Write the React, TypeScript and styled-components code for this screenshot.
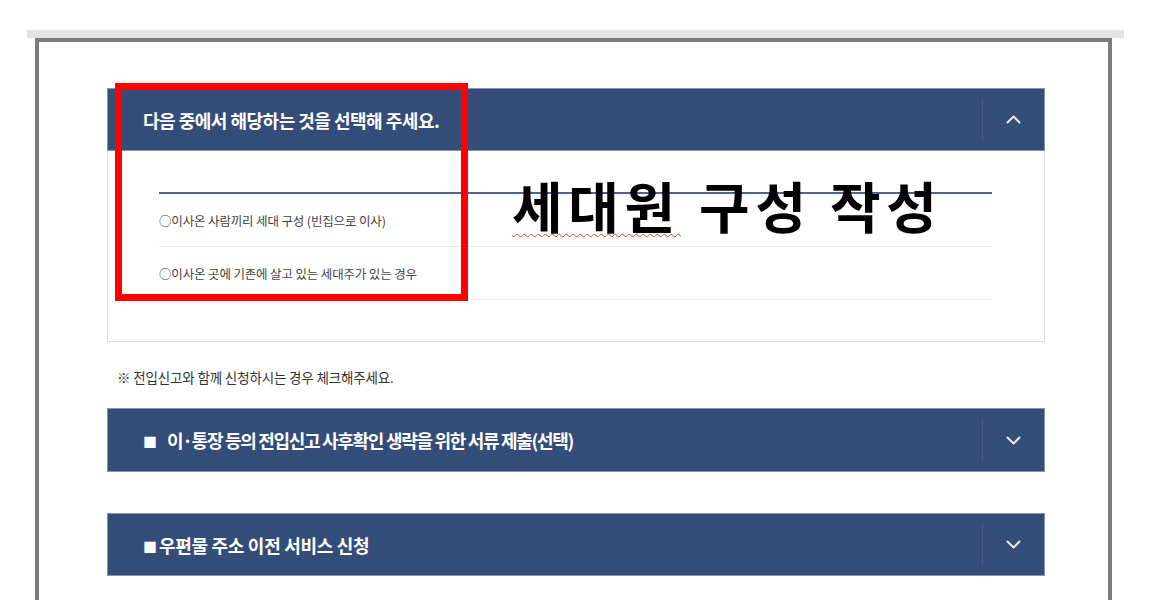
import React from "react";
import styled, { createGlobalStyle } from "styled-components";

const GlobalStyle = createGlobalStyle`
  html, body {
    margin: 0;
    padding: 0;
    background: #ffffff;
  }
  body {
    font-family: "Noto Sans CJK KR", "Noto Sans", sans-serif;
  }
  * { box-sizing: border-box; }
`;

const Page = styled.div`
  height: 600px;
  overflow: hidden;
  padding-top: 30px;
`;

const TopStrip = styled.div`
  margin-left: 27px;
  width: 1097px;
  height: 8px;
  background: #e4e4e4;
`;

const Frame = styled.div`
  position: relative;
  margin-left: 35px;
  width: 1077px;
  height: 562px;
  border: 4px solid #7f7b7a;
  border-bottom: none;
  padding: 46px 63px 0 68px;
`;

const Accordion = styled.section<{ $gap?: number }>`
  margin-bottom: ${(p) => p.$gap ?? 0}px;
`;

const Header = styled.div<{ $h?: number }>`
  display: flex;
  align-items: center;
  height: ${(p) => p.$h ?? 63}px;
  background: #344c78;
  border: 1px solid #8393b4;
`;

const HeaderTitle = styled.h3<{ $ls: number }>`
  flex: 1;
  margin: 0;
  padding-left: 35px;
  color: #ffffff;
  font-size: 18px;
  font-weight: 700;
  letter-spacing: ${(p) => p.$ls}px;
  white-space: nowrap;
`;

const Bullet = styled.span<{ $space: number }>`
  display: inline-block;
  font-size: 14px;
  letter-spacing: 0;
  margin-right: ${(p) => p.$space}px;
  vertical-align: 1px;
`;

const Toggle = styled.div`
  position: relative;
  width: 62px;
  height: 100%;
  display: flex;
  align-items: center;
  justify-content: center;
  &::before {
    content: "";
    position: absolute;
    left: 0;
    top: 9px;
    bottom: 9px;
    width: 1px;
    background: #445c86;
  }
`;

const Body = styled.div`
  border: 1px solid #dcdcdc;
  border-top: none;
  padding: 41px 52px 41px 51px;
`;

const OptionList = styled.ul`
  list-style: none;
  margin: 0;
  padding: 0;
  border-top: 2px solid #4d6290;
`;

const OptionRow = styled.li`
  display: flex;
  align-items: center;
  height: 53px;
  border-bottom: 1px solid #ebebeb;
  color: #444444;
  font-size: 12.5px;
  letter-spacing: -0.15px;
  padding-top: 1px;
`;

const Note = styled.p`
  margin: 0;
  height: 66px;
  display: flex;
  align-items: center;
  padding: 3px 0 0 10px;
  color: #333333;
  font-size: 13.5px;
  letter-spacing: -0.15px;
`;

const RedBox = styled.div`
  position: absolute;
  left: 76px;
  top: 41px;
  width: 353px;
  height: 218px;
  border: 7px solid #ff0000;
  pointer-events: none;
`;

const Annotation = styled.div`
  position: absolute;
  left: 473px;
  top: 132px;
  font-family: "Noto Sans CJK KR", sans-serif;
  font-weight: 700;
  font-size: 55px;
  line-height: 1.1;
  letter-spacing: 5.7px;
  color: #000000;
  white-space: nowrap;
`;

const Misspelled = styled.span`
  text-decoration: underline wavy #e0413a;
  text-decoration-thickness: 1px;
  text-underline-offset: 5px;
`;

const Chevron = ({ up }: { up?: boolean }) => (
  <svg width="15" height="9" viewBox="0 0 15 9" fill="none">
    <polyline
      points={up ? "1.5,7.5 7.5,1.5 13.5,7.5" : "1.5,1.5 7.5,7.5 13.5,1.5"}
      stroke="#e8edf5"
      strokeWidth="2"
      strokeLinecap="round"
      strokeLinejoin="round"
    />
  </svg>
);

export default function App() {
  return (
    <Page>
      <GlobalStyle />
      <TopStrip />
      <Frame>
        <Accordion>
          <Header>
            <HeaderTitle $ls={-0.5}>다음 중에서 해당하는 것을 선택해 주세요.</HeaderTitle>
            <Toggle>
              <Chevron up />
            </Toggle>
          </Header>
          <Body>
            <OptionList>
              <OptionRow>○이사온 사람끼리 세대 구성 (빈집으로 이사)</OptionRow>
              <OptionRow>○이사온 곳에 기존에 살고 있는 세대주가 있는 경우</OptionRow>
            </OptionList>
          </Body>
        </Accordion>
        <Note>※ 전입신고와 함께 신청하시는 경우 체크해주세요.</Note>
        <Accordion $gap={41}>
          <Header $h={64}>
            <HeaderTitle $ls={-1.3}>
              <Bullet $space={10}>■</Bullet>이·통장 등의 전입신고 사후확인 생략을 위한 서류 제출(선택)
            </HeaderTitle>
            <Toggle>
              <Chevron />
            </Toggle>
          </Header>
        </Accordion>
        <Accordion>
          <Header>
            <HeaderTitle $ls={-0.3}>
              <Bullet $space={2}>■</Bullet>우편물 주소 이전 서비스 신청
            </HeaderTitle>
            <Toggle>
              <Chevron />
            </Toggle>
          </Header>
        </Accordion>
        <RedBox />
        <Annotation>
          <Misspelled>세대원</Misspelled> 구성 작성
        </Annotation>
      </Frame>
    </Page>
  );
}
